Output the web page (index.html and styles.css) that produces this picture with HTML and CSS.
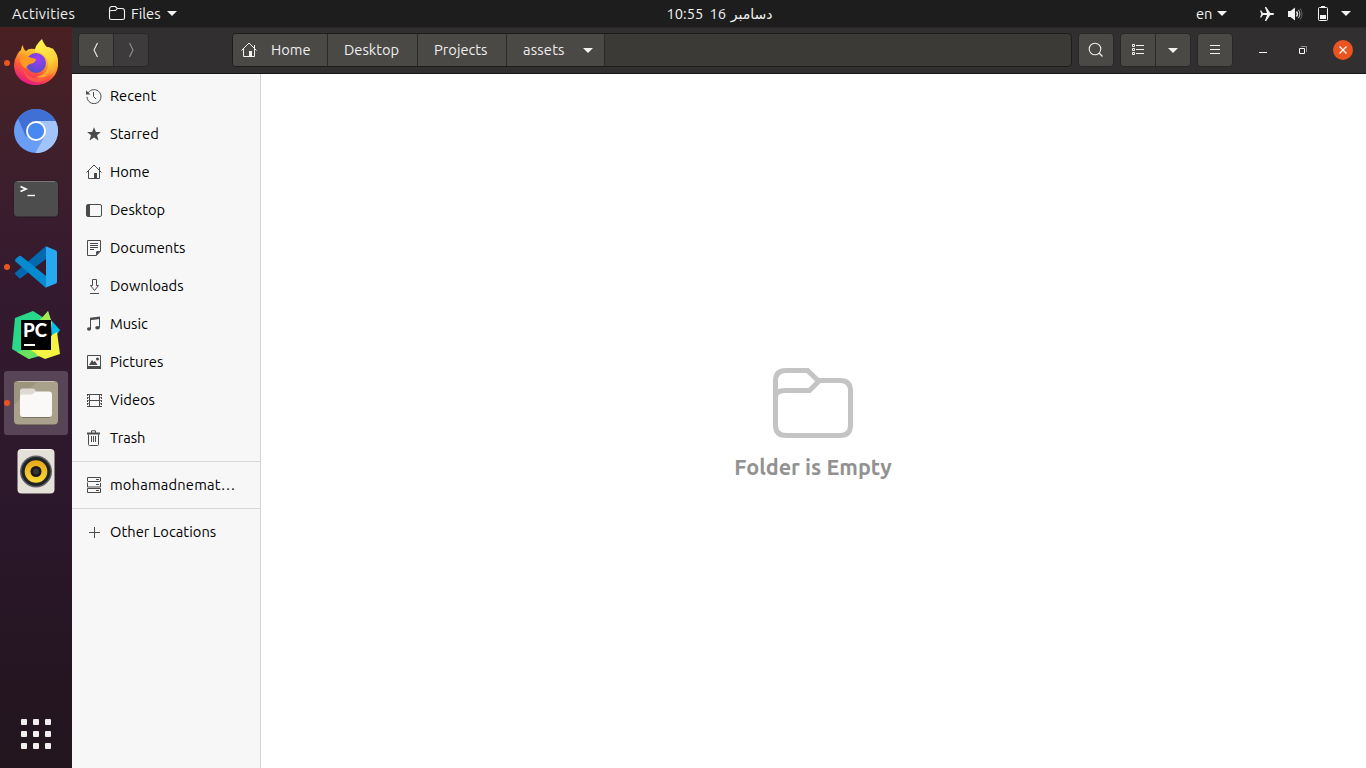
FILE: index.html
```html
<!DOCTYPE html>
<html lang="en">
<head>
<meta charset="utf-8">
<title>assets</title>
<link rel="stylesheet" href="styles.css">
</head>
<body>
<div class="topbar">
  <div class="top-left">
    <span class="activities">Activities</span>
    <svg class="top-folder" width="18" height="16" viewBox="0 0 18 16"><path d="M1.5 12V3q0-2.500 2.500-2.500h3.300l2 2H14q2.500 0 2.500 2.500v7q0 1.500-2 1.500h-11q-2 0-2-1.500zM1.500 5.500q0-1 2-1h4l1.800-2" fill="none" stroke="#f2f2f2" stroke-width="1.100"/></svg>
    <span class="files">Files</span>
    <svg class="tri" width="10" height="5" viewBox="0 0 10 5"><path d="M0 0h10L5 5z" fill="#f2f2f2"/></svg>
  </div>
  <div class="clock"><span class="time">10:55</span><span class="day">16</span><span class="month" dir="rtl">دسامبر</span></div>
  <div class="top-right">
    <span class="lang">en</span>
    <svg class="tri" width="10" height="5" viewBox="0 0 10 5"><path d="M0 0h10L5 5z" fill="#f2f2f2"/></svg>
    <svg class="plane" width="16" height="16" viewBox="0 0 16 16"><path d="M1 4.500h1.200l1.800 2.500H8L5.800 1H7.200L11.300 7H14q1.200.3 1.200 1T14 9h-2.700L7.200 15H5.800L8 9H4l-1.800 2.500H1L2.300 8z" fill="#f2f2f2"/></svg>
    <svg class="volume" width="16" height="16" viewBox="0 0 16 16"><path d="M1 5h2.500L8 1.500v13L3.500 11H1z" fill="#f2f2f2"/><path d="M9.500 5.500q2 2.500 0 5" fill="none" stroke="#f2f2f2" stroke-width="1.300"/><path d="M11.300 3.800q3.200 4.200 0 8.400" fill="none" stroke="#ccc"/><path d="M13.200 2.500q3.600 5.500 0 11" fill="none" stroke="#777" stroke-width=".8"/></svg>
    <svg class="battery" width="10" height="16" viewBox="0 0 10 16"><rect x=".5" y="2.500" width="9" height="13" rx="1" fill="none" stroke="#f2f2f2"/><path d="M3 1h4v1.500H3zM2 10h6v4H2z" fill="#f2f2f2"/></svg>
    <svg class="tri" width="10" height="5" viewBox="0 0 10 5"><path d="M0 0h10L5 5z" fill="#f2f2f2"/></svg>
  </div>
</div>
<div class="desktop">
  <nav class="dock">
    <div class="app running">
      <svg width="64" height="64" viewBox="0 0 64 64">
        <defs>
          <linearGradient id="fx" x1=".8" y1="0" x2=".3" y2="1"><stop offset="0" stop-color="#fff44f"/><stop offset=".38" stop-color="#ffb02a"/><stop offset=".65" stop-color="#ff5a36"/><stop offset="1" stop-color="#e6138a"/></linearGradient>
          <linearGradient id="fy" x1=".3" y1="0" x2=".7" y2="1"><stop offset="0" stop-color="#fff44f"/><stop offset=".6" stop-color="#ffd43a"/><stop offset="1" stop-color="#ff8d25"/></linearGradient>
          <radialGradient id="fp" cx=".6" cy=".3" r=".7"><stop offset="0" stop-color="#a13cf5"/><stop offset=".6" stop-color="#7345dc"/><stop offset="1" stop-color="#4d52c8"/></radialGradient>
        </defs>
        <path d="M19 14q-2 2-2 5-3 2-4 5-3 5-3 10c0 12 10 20 22 20s22-9 22-21q0-9-5-15-7-4-11-1l-8 1q-5-1-8 2-3-2-3-6z" fill="url(#fx)"/>
        <path d="M38 8q-8 7-7 13 8 0 12 7c4 10-3 17-11 18 12 3 22-6 22-15 0-7-3-11-6-14v3q-8-5-10-12z" fill="url(#fy)"/>
        <circle cx="32" cy="32" r="10" fill="url(#fp)"/>
        <path d="M16 27q6-3 12 0l4 1q0 4-6 5-4 2-4 5-6-3-6-11z" fill="#ff9a22"/>
        <path d="M19 36q2 9 11 11 12 2 17-8-2 12-15 12-11-1-13-15z" fill="#ff6838" opacity=".7"/>
      </svg>
    </div>
    <div class="app">
      <svg width="64" height="64" viewBox="0 0 64 64"><circle cx="32" cy="32" r="22" fill="#6a9df6"/><path d="M14 19.300A22 22 0 0 1 51.600 22H32l-10 16z" fill="#4170d4"/><path d="M51.600 22A22 22 0 0 1 31.500 54L41 36.500 32 22z" fill="#a3c4fb"/><path d="M14 19.300 23 36l4-4z" fill="#4170d4"/><circle cx="32" cy="32" r="10" fill="#fff"/><circle cx="32" cy="32" r="8.100" fill="#4688f4"/></svg>
    </div>
    <div class="app">
      <svg width="64" height="64" viewBox="0 0 64 64"><rect x="9.500" y="13.500" width="45" height="37" rx="4" fill="#2a1a24"/><rect x="10" y="14" width="44" height="35.500" rx="3.500" fill="#4d4d4d"/><path d="M13 14.500h38" stroke="#777"/><path d="m16.500 19.500 5.500 2.500-5.500 2.500" fill="none" stroke="#fff" stroke-width="1.700"/><path d="M23.500 28.500h7.500" stroke="#fff" stroke-width="1.400"/></svg>
    </div>
    <div class="app running">
      <svg width="64" height="64" viewBox="0 0 64 64"><path d="M11.500 39.500 15 43q1 .7 2 0l25-19V11L11.500 37.500q-1 1 0 2z" fill="#0069b0"/><path d="M11.500 24 15 21q1-.7 2 0l25 20v12L11.500 26.500q-1-1 0-2.500z" fill="#078bd0"/><path d="M42 11.500v41l10-4q1-.5 1-2v-29q0-1.500-1-2l-9.500-4z" fill="#29a8f2"/></svg>
    </div>
    <div class="app">
      <svg width="64" height="64" viewBox="0 0 64 64"><defs><linearGradient id="pcg" y2="1"><stop stop-color="#21d789"/><stop offset=".6" stop-color="#2fd98a"/><stop offset="1" stop-color="#8de85c"/></linearGradient></defs><path d="m11 15 18-7 11 7 4-7 4 14-5 29-18 5-17-10z" fill="url(#pcg)"/><path d="m47 17 9 10-8 12z" fill="#08bfe9"/><path d="m44 8-9 10 9 20 4-18z" fill="#a5ea55"/><path d="m48 32 5-3 3 22-15 5-17-8 20-10z" fill="#f6f442"/><path d="m13 49 12-3 8 5-8 5z" fill="#6be35f"/><path d="M17 17h30v30H17z" fill="#000"/><path d="M20 41h11v2H20z" fill="#fff"/><text x="19" y="33.500" class="pc" textLength="24" lengthAdjust="spacingAndGlyphs">PC</text></svg>
    </div>
    <div class="app running active">
      <svg width="64" height="64" viewBox="0 0 64 64"><rect x="10" y="10.500" width="44" height="44" rx="4" fill="#514544"/><rect x="10" y="10" width="44" height="43.500" rx="4" fill="#aaa18c"/><path d="m10 34 24-24H14q-4 0-4 4z" fill="#9d947e"/><path d="M14 10.500h36" stroke="#c9c2b3"/><path d="M16 20q0-2.500 2.500-2.500h10q2 0 3 2l1 2V28H16z" fill="#dedad2"/><path d="M16 25q0-1.500 2-1.500h10l4-3h13q3 0 3 3V43q0 3-3 3H19q-3 0-3-3z" fill="#faf9f7"/><path d="M18 46.500h28" stroke="#7b715f"/></svg>
    </div>
    <div class="app">
      <svg width="64" height="64" viewBox="0 0 64 64"><defs><linearGradient id="cone" x2="0" y2="1"><stop stop-color="#e6a719"/><stop offset="1" stop-color="#fada38"/></linearGradient></defs><rect x="13.500" y="10" width="37" height="44.500" rx="4" fill="#e4e1d9"/><path d="M17 10.500h30" stroke="#f8f7f4"/><circle cx="32" cy="32.500" r="16" fill="#5d6065"/><circle cx="32" cy="32.500" r="14.500" fill="#202428"/><circle cx="32" cy="32.500" r="11.300" fill="url(#cone)"/><circle cx="32" cy="32.500" r="5.500" fill="#17191b"/><circle cx="32" cy="32.500" r="3" fill="#343638"/></svg>
    </div>
    <div class="apps-grid"><i></i><i></i><i></i><i></i><i></i><i></i><i></i><i></i><i></i></div>
  </nav>
  <main class="window">
    <header class="header">
      <div class="group nav">
        <button class="btn"><svg width="16" height="20" viewBox="0 0 16 20"><path d="M9.500 3 6 10l3.500 7" fill="none" stroke="#eee" stroke-width="1.100"/></svg></button>
        <button class="btn dim"><svg width="16" height="20" viewBox="0 0 16 20"><path d="m6.500 3 3.500 7-3.500 7" fill="none" stroke="#919190" stroke-width="1.100"/></svg></button>
      </div>
      <div class="path">
        <div class="crumb c-home"><svg width="16" height="16" viewBox="0 0 16 16"><path d="M.5 8.500 8 1l7.500 7.500M2.500 7v7.500h11V7M13.500 6V3" fill="none" stroke="#f2f2f2"/><path d="M8 9h3v5.500H8z" fill="#f2f2f2"/></svg><span>Home</span></div>
        <div class="crumb c-desktop"><span>Desktop</span></div>
        <div class="crumb c-projects"><span>Projects</span></div>
        <div class="crumb c-assets"><span>assets</span><svg class="tri" width="10" height="5" viewBox="0 0 10 5"><path d="M0 0h10L5 5z" fill="#f2f2f2"/></svg></div>
      </div>
      <div class="group search"><button class="btn"><svg width="16" height="16" viewBox="0 0 16 16"><circle cx="7" cy="7" r="5.800" fill="none" stroke="#eee" stroke-width="1.100"/><path d="m11 11 3.500 3.500" stroke="#eee" stroke-width="1.300"/></svg></button></div>
      <div class="group view">
        <button class="btn"><svg width="16" height="16" viewBox="0 0 16 16"><path d="M2.500 2.500h2v2h-2zM2.500 6.500h2v2h-2zM2.500 10.500h2v2h-2zM6 3.500h8M6 7.500h8M6 11.500h8" fill="none" stroke="#f2f2f2"/></svg></button>
        <button class="btn"><svg width="10" height="5" viewBox="0 0 10 5"><path d="M0 0h10L5 5z" fill="#f2f2f2"/></svg></button>
      </div>
      <div class="group menu"><button class="btn"><svg width="16" height="16" viewBox="0 0 16 16"><path d="M3 3.500h10M3 7.500h10M3 11.500h10" stroke="#f2f2f2"/></svg></button></div>
      <div class="controls">
        <svg width="16" height="16" viewBox="0 0 16 16"><path d="M4 10.500h8" stroke="#f2f2f2"/></svg>
        <svg width="16" height="16" viewBox="0 0 16 16"><path d="M4.500 6.500h5v5h-5z" fill="none" stroke="#fff"/><path d="M6 4.500h5.500V10" fill="none" stroke="#8e8c8d"/></svg>
        <svg width="20" height="20" viewBox="0 0 20 20"><circle cx="10" cy="10" r="10" fill="#e95420"/><path d="m6.500 6.500 7 7m0-7-7 7" stroke="#fff" stroke-width="1.200"/></svg>
      </div>
    </header>
    <div class="content">
      <aside class="sidebar">
        <div class="place"><svg width="16" height="16" viewBox="0 0 16 16"><path d="M2.200 4.700A7 7 0 1 1 1 8.800M7.500 4v4.500l2.500 2.500" fill="none" stroke="#4a4a4a"/><path d="M0 2.500V6.500h4.500z" fill="#4a4a4a"/></svg><span>Recent</span></div>
        <div class="place"><svg width="16" height="16" viewBox="0 0 16 16"><path d="m8 1.200 1.900 4.900h5L11 9.300l1.500 5.200L8 11.500l-4.500 3L5 9.300 1.100 6.100h5z" fill="#4a4a4a"/></svg><span>Starred</span></div>
        <div class="place"><svg width="16" height="16" viewBox="0 0 16 16"><path d="M.5 8.500 8 1l7.500 7.500M2.500 7v7.500h11V7M13.500 6V3" fill="none" stroke="#4a4a4a"/><path d="M8 9h3v5.500H8z" fill="#4a4a4a"/></svg><span>Home</span></div>
        <div class="place"><svg width="16" height="16" viewBox="0 0 16 16"><rect x=".5" y="2.500" width="15" height="12" rx="1.500" fill="none" stroke="#4a4a4a"/><path d="M1 3h3v11H1z" fill="#4a4a4a"/></svg><span>Desktop</span></div>
        <div class="place"><svg width="16" height="16" viewBox="0 0 16 16"><path d="M1.500.5h13V11L10.500 15.500h-9zM4 3.500h8M4 5.500h8M4 7.500h8M4 9.500h4" fill="none" stroke="#4a4a4a"/><path d="M10 15.500V12l1-1h3.500z" fill="#4a4a4a"/></svg><span>Documents</span></div>
        <div class="place"><svg width="16" height="16" viewBox="0 0 16 16"><path d="M6.500 1.500h4v6h2l-4 5-4-5h2zM4 15.500h9" fill="none" stroke="#4a4a4a"/></svg><span>Downloads</span></div>
        <div class="place"><svg width="16" height="16" viewBox="0 0 16 16"><path d="M4.500 13V2.500m9 9V1" fill="none" stroke="#4a4a4a"/><path d="M4 1.800 14 .5v2.500L4 4.300z" fill="#4a4a4a"/><ellipse cx="3" cy="13" rx="2" ry="1.700" fill="#4a4a4a"/><ellipse cx="11.500" cy="11.700" rx="2.300" ry="1.800" fill="#4a4a4a"/></svg><span>Music</span></div>
        <div class="place"><svg width="16" height="16" viewBox="0 0 16 16"><path d="M1.500 1.500h13v12h-13z" fill="none" stroke="#4a4a4a"/><path d="M1 12h14v3H1zM3 11l3-5 1.500 2L9 7l2.500 4z" fill="#4a4a4a"/><circle cx="11.500" cy="5" r="1.500" fill="#4a4a4a"/></svg><span>Pictures</span></div>
        <div class="place"><svg width="16" height="16" viewBox="0 0 16 16"><path d="M1 2.500h15M1 14.500h15M3.500 2v13M13.500 2v13M4 8.500h10" fill="none" stroke="#4a4a4a"/><path d="M1.500 2v13M15.500 2v13" stroke="#4a4a4a" stroke-dasharray="2 1"/><path d="M1 5.500h2m-2 3h2m-2 3h2M14 5.500h2m-2 3h2m-2 3h2" stroke="#4a4a4a" stroke-width=".7"/></svg><span>Videos</span></div>
        <div class="place"><svg width="16" height="16" viewBox="0 0 16 16"><path d="M5.500 3V.8h4V3M2.500 4.500v10q0 1 1 1h8q1 0 1-1v-10M5.500 6v6M7.500 6v6M9.500 6v6" fill="none" stroke="#4a4a4a"/><path d="M1 3.500h13" stroke="#4a4a4a" stroke-width="2"/></svg><span>Trash</span></div>
        <div class="separator"></div>
        <div class="place"><svg width="16" height="16" viewBox="0 0 16 16"><path d="M1.500 4V.5h13V4M1.500 4.500h13M1.500 5.500v4.500h13V6M1.500 11.500h13v4h-13zM10 2.500h3M10 7.500h3M10 13.500h3" fill="none" stroke="#4a4a4a"/></svg><span class="t-server">mohamadnemat…</span></div>
        <div class="separator"></div>
        <div class="place"><svg width="16" height="16" viewBox="0 0 16 16"><path d="M3 8.500h11M8.500 3v11" stroke="#4a4a4a"/></svg><span class="t-other">Other Locations</span></div>
      </aside>
      <section class="empty">
        <svg width="80" height="70" viewBox="0 0 80 70"><path d="M2.500 22V13Q2.500 2.500 13 2.500h21.500L45 12.500h22q10.500 0 10.500 10.500v34q0 10.500-10.500 10.500H13Q2.500 67.500 2.500 57V29q0-6.500 10.500-6.500h23.500L46 13" fill="none" stroke="#c4c4c4" stroke-width="5"/><path d="M2.500 21v10" stroke="#c4c4c4" stroke-width="5"/></svg>
        <p class="t-empty">Folder is Empty</p>
      </section>
    </div>
  </main>
</div>
</body>
</html>
```
FILE: styles.css
```css
* { box-sizing: border-box; }
body { margin: 0; width: 1366px; height: 768px; overflow: hidden; font: 14.667px/20px Ubuntu, "Noto Sans", "DejaVu Sans", sans-serif; color: #111; background: #fff; }
svg { display: block; flex: none; }
span, p { white-space: nowrap; }
.topbar { height: 27px; display: grid; grid-template-columns: 1fr auto 1fr; align-items: center; background: #1d1d1d; color: #f2f2f2; font-size: 14.667px; }
.top-left { display: flex; align-items: center; padding-left: 12px; }
.activities { width: 63px; margin-right: 33px; letter-spacing: .3px; }
.top-folder { margin-right: 5px; }
.files { width: 31px; margin-right: 5px; }
.clock { display: flex; width: 106px; margin-left: 73px; }
.time { width: 43px; }
.day { width: 22px; }
.month { width: 41px; direction: rtl; font-size: 14px; font-family: "DejaVu Sans", sans-serif; }
.top-right { display: flex; align-items: center; justify-content: flex-end; padding-right: 15px; }
.lang { width: 16px; margin-right: 5px; }
.plane { margin-left: 32px; margin-right: 12px; }
.volume { margin-right: 15px; }
.battery { margin-right: 13px; margin-top: -2px; }
.desktop { display: flex; height: 741px; }
.dock { width: 72px; padding: 4px 4px 19px; display: flex; flex-direction: column; gap: 4px; background: linear-gradient(#4a2022 0%, #40202a 14%, #351a2f 34%, #2b172b 65%, #22151d 100%); }
.app { position: relative; width: 64px; height: 64px; border-radius: 3px; }
.app.active { background: #574457; }
.running::before { content: ""; position: absolute; left: 0; top: 29px; width: 6px; height: 6px; border-radius: 50%; background: #e95420; }
.pc { font: 900 18px Lato, "Noto Sans", sans-serif; fill: #fff; }
.apps-grid { margin: auto auto 0; display: grid; grid-template-columns: repeat(3, 6px); gap: 6px; }
.apps-grid i { width: 6px; height: 6px; border-radius: 1px; background: #f0efed; }
.window { flex: 1; display: flex; flex-direction: column; min-width: 0; }
.header { height: 47px; padding: 5px 13px 0 6px; display: flex; align-items: flex-start; background: #322f30; border-bottom: 1px solid #181516; border-top: 1px solid #292727; color: #eee; }
.group { display: flex; height: 34px; border: 1px solid #282626; border-radius: 4px; overflow: hidden; }
.btn { flex: 1; padding: 0; border: 0; border-left: 1px solid #2a2929; background: #4a4946; display: flex; align-items: center; justify-content: center; }
.btn:first-child { border-left: 0; }
.btn.dim { background: #3d3b3b; }
.nav { width: 71px; }
.path { width: 840px; height: 34px; margin-left: 83px; display: flex; background: #3b3a37; border: 1px solid #1d1b1b; border-radius: 4px; overflow: hidden; }
.crumb { display: flex; align-items: center; background: #4a4946; border-right: 1px solid #2a2929; }
.c-home { width: 95px; padding-left: 8px; gap: 14px; }
.c-desktop { width: 90px; padding-left: 16px; }
.c-projects { width: 89px; padding-left: 16px; }
.c-assets { width: 98px; padding-left: 16px; gap: 17px; }
.c-assets span { width: 43px; letter-spacing: .2px; }
.search { width: 36px; margin-left: 6px; }
.view { width: 71px; margin-left: 6px; }
.menu { width: 36px; margin-left: 6px; }
.controls { height: 34px; margin-left: auto; display: flex; align-items: center; gap: 24px; }
.controls svg:last-child { margin-left: -2px; }
.content { flex: 1; display: flex; min-height: 0; }
.sidebar { width: 189px; padding-top: 3px; background: #f7f7f7; border-right: 1px solid #d4d4d4; }
.place { height: 38px; padding-left: 14px; display: flex; align-items: center; gap: 8px; color: #000; }
.t-server { letter-spacing: .2px; }
.t-other { letter-spacing: .05px; }
.separator { height: 1px; margin: 4px 0; background: #d8d8d8; }
.empty { flex: 1; display: flex; flex-direction: column; align-items: center; padding: 294px 1px 0 0; }
.t-empty { margin: 15px 0 0; font-size: 21.6px; line-height: 28px; font-weight: bold; color: #929292; }
```
